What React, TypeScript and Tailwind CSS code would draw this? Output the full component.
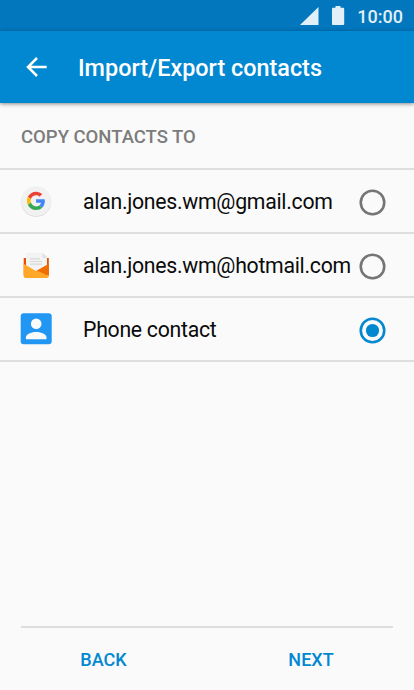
import { useState } from "react";
import type { ReactNode } from "react";
import { clsx } from "clsx";

function GoogleIcon() {
  return (
    <svg viewBox="0 0 32 32" className="size-8">
      <circle cx="16.2" cy="16.8" r="15" fill="#d9d9d9" />
      <circle cx="16.2" cy="16.1" r="14.9" fill="#f1f1f1" />
      <g transform="translate(6.9 6.7) scale(0.382)">
        <path
          fill="#ea4335"
          d="M24 9.5c3.54 0 6.71 1.22 9.21 3.6l6.85-6.85C35.9 2.38 30.47 0 24 0 14.62 0 6.51 5.38 2.56 13.22l7.98 6.19C12.43 13.72 17.74 9.5 24 9.5z"
        />
        <path
          fill="#4285f4"
          d="M46.98 24.55c0-1.57-.15-3.09-.38-4.55H24v9.02h12.94c-.58 2.96-2.26 5.48-4.78 7.18l7.73 6c4.51-4.18 7.09-10.36 7.09-17.65z"
        />
        <path
          fill="#fbbc05"
          d="M10.53 28.59c-.48-1.45-.76-2.99-.76-4.59s.27-3.14.76-4.59l-7.98-6.19C.92 16.46 0 20.12 0 24c0 3.88.92 7.54 2.56 10.78l7.97-6.19z"
        />
        <path
          fill="#34a853"
          d="M24 48c6.48 0 11.93-2.13 15.89-5.81l-7.73-6c-2.15 1.45-4.92 2.3-8.16 2.3-6.26 0-11.57-4.22-13.47-9.91l-7.98 6.19C6.51 42.62 14.62 48 24 48z"
        />
      </g>
    </svg>
  );
}

function MailIcon() {
  return (
    <svg viewBox="0 0 32 32" className="size-8">
      <path d="M3.700 9h25.100v17H3.700z" fill="#e65100" />
      <path d="M6 3.700h16.500l4.500 4.300V25H6z" fill="#f3f3f3" />
      <path d="M22.500 3.700l4.500 4.300v1h-4.500z" fill="#e2e2e2" />
      <path d="M10 9.900h10M10 12.500h12M10 15.100h12" stroke="#d9d9d9" strokeWidth="1.200" />
      <path d="M28.800 14.800V27L16 22z" fill="#ef6c00" />
      <path
        d="M3.700 14.800L15.400 21.800h2L28.800 27c0 1.300-.6 1.900-1.900 1.900H5.400c-1.100 0-1.700-.7-1.700-1.800z"
        fill="#ffa726"
      />
    </svg>
  );
}

function PersonIcon() {
  return (
    <svg viewBox="0 0 32 32" className="size-8">
      <rect x="0.7" y="0.2" width="31" height="31" rx="3" fill="#2196f3" />
      <circle cx="16.2" cy="10.7" r="5.3" fill="#fafafa" />
      <path d="M5.900 26.200v-1.800c0-3.500 6.900-5.300 10.300-5.300s10.300 1.800 10.300 5.300v1.800z" fill="#fafafa" />
    </svg>
  );
}

function StatusBar() {
  return (
    <div className="flex h-[31px] items-center justify-end bg-[#0277bd] pr-[11px] text-[#e1eff8]">
      <svg viewBox="0 0 19 18" className="mr-[13px] h-[18px] w-[19px]" fill="currentColor">
        <path d="M18.500 0v18H0z" />
      </svg>
      <svg viewBox="0 0 13 19" className="mr-[12px] h-[19px] w-[13px]" fill="currentColor">
        <path d="M3.500 0h5v1.800h2.600c.6 0 1.100.5 1.100 1.100v15c0 .6-.5 1.100-1.100 1.100H1.100C.5 19 0 18.500 0 17.900v-15c0-.6.5-1.100 1.100-1.100h2.400z" />
      </svg>
      <span className="pt-[2px] text-[18px] font-medium leading-none">10:00</span>
    </div>
  );
}

function Radio({ checked }: { checked: boolean }) {
  return (
    <svg
      viewBox="0 0 28 28"
      fill="none"
      className={clsx("mt-[3px] size-7 shrink-0", checked ? "text-[#0288d1]" : "text-[#757575]")}
    >
      <circle cx="13.5" cy="13.500" r="11.750" stroke="currentColor" strokeWidth="2.600" />
      {checked && <circle cx="13.5" cy="13.500" r="6.600" fill="currentColor" />}
    </svg>
  );
}

const targets: { id: string; label: string; icon: ReactNode }[] = [
  { id: "gmail", label: "alan.jones.wm@gmail.com", icon: <GoogleIcon /> },
  { id: "hotmail", label: "alan.jones.wm@hotmail.com", icon: <MailIcon /> },
  { id: "phone", label: "Phone contact", icon: <PersonIcon /> },
];

export default function App() {
  const [selected, setSelected] = useState("phone");

  return (
    <div className="flex h-[690px] w-[414px] flex-col overflow-hidden bg-[#fafafa] font-['Roboto',sans-serif]">
      <StatusBar />

      <header className="relative flex h-[72px] shrink-0 items-center bg-[#0288d1] pl-[26px] text-white shadow-[0_1px_4px_rgba(0,0,0,0.45)]">
        <svg viewBox="0 0 21 20" className="h-5 w-[21px]" fill="none" stroke="currentColor" strokeWidth="2.500">
          <path d="M11 1L2 10l9 9M2 10h18.700" />
        </svg>
        <h1 className="ml-[31px] pt-[3px] text-[23.400px] font-medium leading-none">Import/Export contacts</h1>
      </header>

      <h2 className="flex h-[67px] shrink-0 items-center border-b-2 border-[#dedede] pl-[21px] pt-[5px] text-[18.500px] font-medium text-[#7c7c7c]">
        COPY CONTACTS TO
      </h2>

      {/* Destinations */}
      <div role="radiogroup">
        {targets.map((t) => (
          <button
            key={t.id}
            type="button"
            role="radio"
            aria-checked={selected === t.id}
            onClick={() => setSelected(t.id)}
            className="flex h-16 w-full items-center border-b-2 border-[#dedede] pl-5 pr-[27px] text-left"
          >
            {t.icon}
            <span className="ml-[31px] flex-1 whitespace-nowrap pt-[2px] text-[21.250px] leading-none tracking-[-0.280px] text-[#0a0a0a]">
              {t.label}
            </span>
            <Radio checked={selected === t.id} />
          </button>
        ))}
      </div>

      <footer className="mx-[21px] mt-auto grid h-16 grid-cols-2 border-t-2 border-[#dedede] text-[18px] font-medium text-[#0288d1]">
        <button type="button" className="pr-[21px]">BACK</button>
        <button type="button" className="pl-[22px]">NEXT</button>
      </footer>
    </div>
  );
}
